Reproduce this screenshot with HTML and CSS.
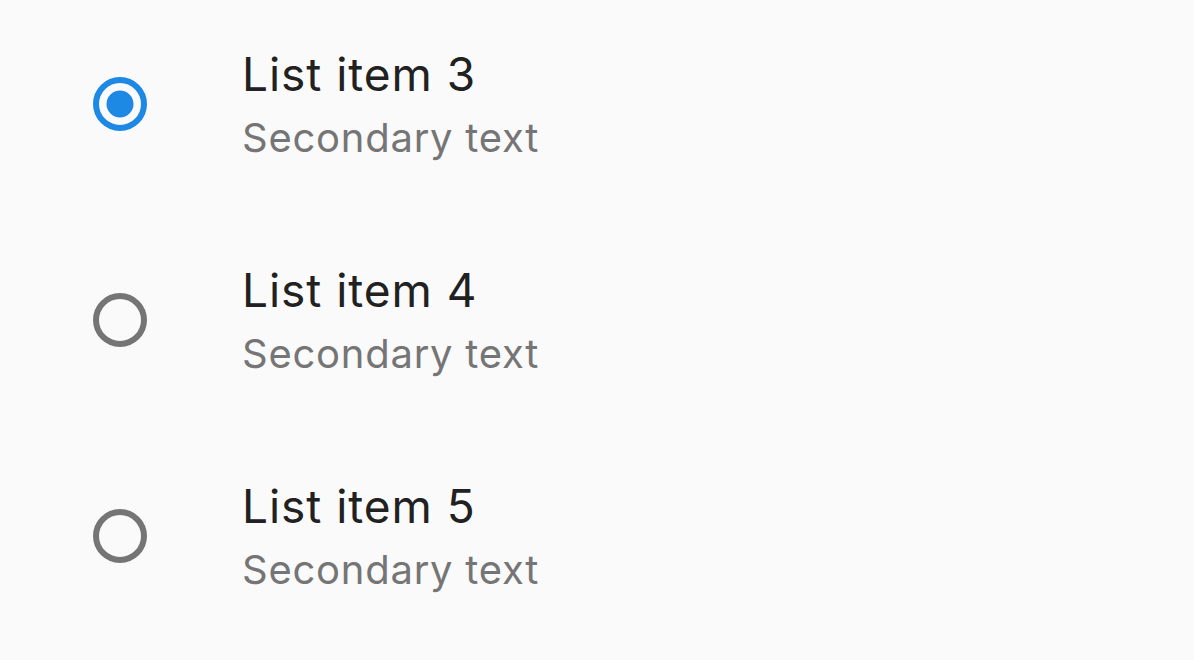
FILE: index.html
```html
<!DOCTYPE html>
<html>
<head>
<meta charset="utf-8">
<link rel="stylesheet" href="styles.css">
</head>
<body>
<div class="list">
  <div class="row">
    <svg class="radio" width="54" height="54" viewBox="0 0 54 54"><circle cx="27" cy="27" r="24" fill="none" stroke="#1e88e5" stroke-width="6"/><circle cx="27" cy="27" r="13.5" fill="#1e88e5"/></svg>
    <div class="text"><div class="primary">List item 3</div><div class="secondary">Secondary text</div></div>
  </div>
  <div class="row">
    <svg class="radio" width="54" height="54" viewBox="0 0 54 54"><circle cx="27" cy="27" r="24" fill="none" stroke="#757575" stroke-width="6"/></svg>
    <div class="text"><div class="primary">List item 4</div><div class="secondary">Secondary text</div></div>
  </div>
  <div class="row">
    <svg class="radio" width="54" height="54" viewBox="0 0 54 54"><circle cx="27" cy="27" r="24" fill="none" stroke="#757575" stroke-width="6"/></svg>
    <div class="text"><div class="primary">List item 5</div><div class="secondary">Secondary text</div></div>
  </div>
</div>
</body>
</html>
```
FILE: styles.css
```css
html, body {
  margin: 0;
  padding: 0;
  background: #fafafa;
  font-family: Inter, Roboto, "Liberation Sans", sans-serif;
  overflow: hidden;
}
.list {
  display: flex;
  flex-direction: column;
  margin-top: -4px;
}
.row {
  height: 216px;
  display: flex;
  align-items: center;
  padding-left: 93px;
}
.radio {
  flex: none;
  display: block;
  margin-right: 95px;
}
.text {
  display: flex;
  flex-direction: column;
  padding-top: 3px;
}
.primary {
  font-size: 46px;
  line-height: 64px;
  letter-spacing: 0.95px;
  color: #212121;
}
.secondary {
  font-size: 40px;
  line-height: 64px;
  letter-spacing: 0.75px;
  color: #757575;
}
```
